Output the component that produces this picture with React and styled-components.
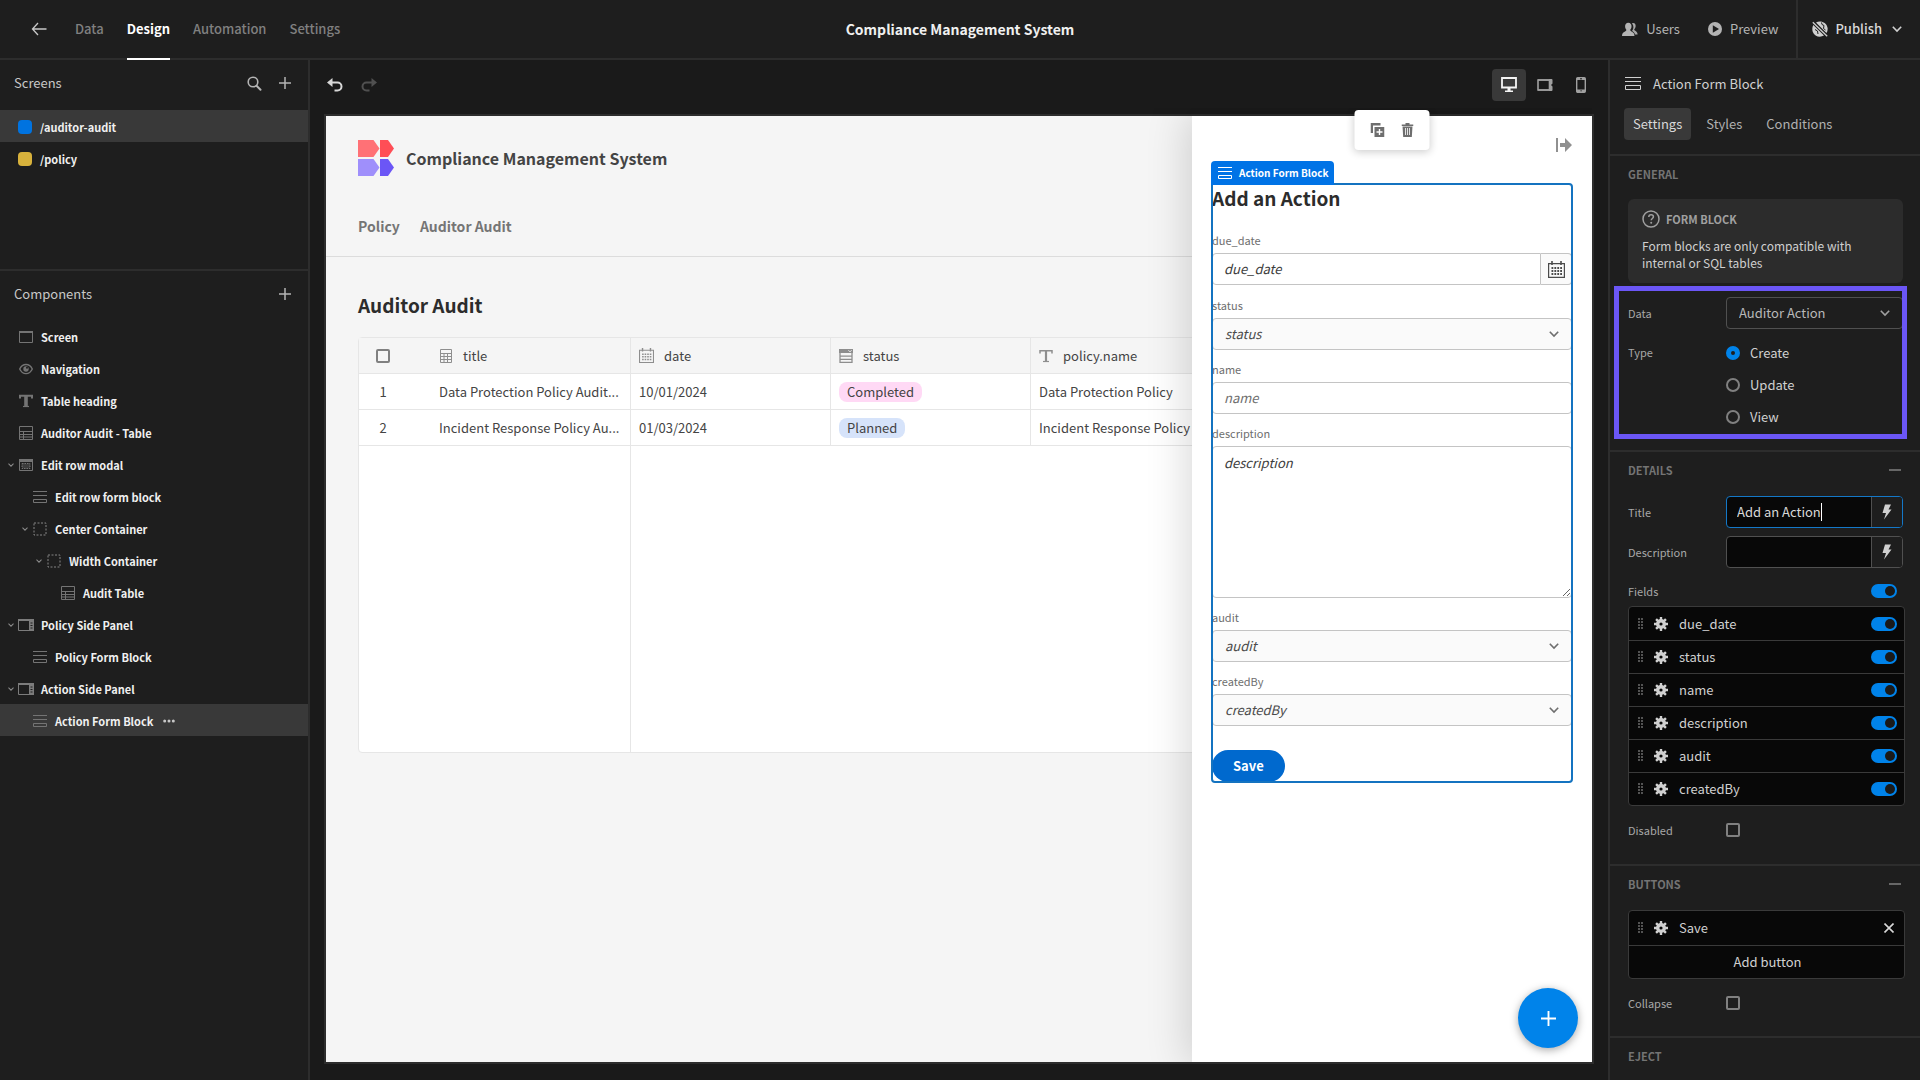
import { useState } from "react";
import styled, { createGlobalStyle, css } from "styled-components";

const GlobalStyle = createGlobalStyle`
  *, *::before, *::after {
    box-sizing: border-box;
  }
  body {
    margin: 0;
    background: #1a1a1a;
  }
  body, button, input, select, textarea {
    font-family: "Noto Sans CJK SC", "Source Sans Pro", "Noto Sans", sans-serif;
    font-size: 13px;
    line-height: 18px;
  }
  button {
    padding: 0;
    border: none;
    background: none;
    color: inherit;
    cursor: pointer;
  }
  svg {
    display: block;
    flex: none;
  }
`;

/* ---------- icons ---------- */

const Svg = ({ w = 16, h = 16, children, ...rest }) => (
  <svg width={w} height={h} viewBox={`0 0 ${w} ${h}`} fill="none" aria-hidden="true" {...rest}>
    {children}
  </svg>
);

const BackIcon = () => (
  <Svg w={16} h={14}>
    <path d="M7 1 1.5 7 7 13M1.5 7H15.5" stroke="#c8c8c8" strokeWidth="1.3" />
  </Svg>
);

const SearchIcon = () => (
  <Svg w={15} h={15}>
    <circle cx="6" cy="6" r="4.8" stroke="#b4b4b4" strokeWidth="1.6" />
    <path d="m9.5 9.8 4 4" stroke="#b4b4b4" strokeWidth="2" strokeLinecap="round" />
  </Svg>
);

const PlusIcon = ({ size = 12, color = "#b4b4b4", weight = 1.5 }) => (
  <svg width={size} height={size} viewBox="0 0 12 12" fill="none" aria-hidden="true">
    <path d="M6 0v12M0 6h12" stroke={color} strokeWidth={weight} />
  </svg>
);

const UndoIcon = () => (
  <Svg w={16} h={14}>
    <path d="M5.5 0v9L0 4.5z" fill="currentColor" />
    <path d="M3 4.5h7.5a4 4 0 0 1 0 8H7.5" stroke="currentColor" strokeWidth="2" />
  </Svg>
);

const RedoIcon = () => (
  <Svg w={16} h={14}>
    <path d="M10.5 0v9L16 4.5z" fill="currentColor" />
    <path d="M13 4.5H5.5a4 4 0 0 0 0 8h3" stroke="currentColor" strokeWidth="2" />
  </Svg>
);

const MonitorIcon = () => (
  <Svg w={16} h={16}>
    <path d="M1 1h14v9.5H1z" stroke="currentColor" strokeWidth="1.8" />
    <path d="M6.5 11h3v2.5H12V15H4v-1.5h2.5z" fill="currentColor" />
  </Svg>
);

const TabletIcon = () => (
  <Svg w={16} h={14}>
    <path d="M1 2h11.5v10H1z" stroke="currentColor" strokeWidth="1.6" />
    <path d="M12 1h2.5q1 0 1 1v3.5L14 7l1.5 1.5V12q0 1-1 1H12z" fill="currentColor" />
    <path d="M1 2h12M1 12h12" stroke="currentColor" strokeWidth="1.4" />
  </Svg>
);

const PhoneIcon = () => (
  <Svg w={10} h={16}>
    <rect x=".7" y=".7" width="8.6" height="14.6" rx="1" stroke="currentColor" strokeWidth="1.4" />
    <path d="M1 1h8v2H1zM1 12.5h8V15H1z" fill="currentColor" />
    <path d="M4 1.8h2M4.5 13.8h1.2" stroke="#1a1a1a" strokeWidth="1" />
  </Svg>
);

const UsersIcon = () => (
  <Svg w={16} h={15}>
    <path
      d="M10 1.2c2.6-.8 4 1 3.600 3.500-.2 1.200-.8 2-1.400 2.800.2 1.400 3.300 1.600 3.400 5H13c-.4-1.800-1.800-2.800-3-3.400 1.800-2.200 2-5.500 0-7.900z"
      fill="#a8a8a8"
    />
    <path
      d="M6.300.8C8.500.8 9.700 2.500 9.500 4.700 9.400 6 8.800 7 8.200 7.800c0 2 4.200 1.600 4.300 6.200H0c.1-4.600 4.400-4.200 4.400-6.200C3.800 7 3.200 6 3.100 4.700 3 2.500 4.100.8 6.300.8z"
      fill="#b4b4b4"
    />
  </Svg>
);

const PlayIcon = () => (
  <Svg w={14} h={14}>
    <circle cx="7" cy="7" r="7" fill="#b4b4b4" />
    <path d="M4.8 3.2v7.6L11 7z" fill="#1e1e1e" />
  </Svg>
);

const GlobeStrikeIcon = () => (
  <Svg w={16} h={16}>
    <path
      d="M4 1.5C8-.8 14.500.8 15.600 7c.2 1.800-.2 3.500-1.100 5L4 1.500zM1.300 4 12 14.600C8 17 2.500 15.500.8 11 0 8.500.2 6 1.300 4z"
      fill="#d0d0d0"
    />
    <path d="m.8 1.2 14.4 14" stroke="#d0d0d0" strokeWidth="1.3" />
    <path d="m3 8.500 2.500 1.500.5 3M9.500 1.500l.5 2 2 1-.5 3 2 1.500" stroke="#1e1e1e" strokeWidth="1" />
  </Svg>
);

const Chevron = ({ size = 10, color = "#a0a0a0", weight = 1.6 }) => (
  <svg width={size} height={size} viewBox="0 0 10 10" fill="none" aria-hidden="true">
    <path d="M.8 2.8 5 7l4.200-4.200" stroke={color} strokeWidth={weight} />
  </svg>
);

const FormIcon = ({ w = 16, color = "#747474" }) => (
  <svg width={w} height={w} viewBox={`0 0 ${w} ${w}`} fill="none" aria-hidden="true">
    <path d={`M0 1.5h${w}M0 5.5h${w}M.5 9.5h${w - 1}v${w - 12 > 3 ? 4 : 3}H.5z`} stroke={color} />
  </svg>
);

const ScreenIcon = () => (
  <Svg w={14} h={14}>
    <path d="M.5 1.5h13v11H.5z" stroke="#747474" />
    <path d="M0 1h14v2H0z" fill="#747474" />
  </Svg>
);

const EyeIcon = ({ color = "#747474" }) => (
  <Svg w={14} h={14}>
    <path d="M.7 7C3.500.9 10.500.9 13.300 7 10.500 13.100 3.500 13.100.7 7z" stroke={color} strokeWidth="1.4" />
    <circle cx="7" cy="7" r="2.7" fill={color} />
    <circle cx="8" cy="5.8" r="1" fill="#1e1e1e" />
  </Svg>
);

const TypeIcon = ({ weight = 3.6, color = "#747474" }) => (
  <Svg w={14} h={14}>
    <path d="M1 4.5V1.8h12v2.7" stroke={color} strokeWidth={weight > 3 ? 2 : 1.5} />
    <path d="M7 1v12" stroke={color} strokeWidth={weight} />
    <path d="M4 12.5h6" stroke={color} strokeWidth="1.2" />
  </Svg>
);

const TableIcon = () => (
  <Svg w={14} h={14}>
    <path d="M.5.5h13v13H.5zM.5 5.5h13M.5 8.500h13M.5 11h13M4.500 5.500v8" stroke="#747474" />
  </Svg>
);

const ModalIcon = () => (
  <Svg w={14} h={14}>
    <path d="M.5 1.5h13v11H.5z" stroke="#747474" />
    <path d="M0 1h14v3H0z" fill="#747474" />
    <path d="M3 5.500h8v5H3z" fill="#3c3c3c" stroke="#747474" strokeDasharray="1.5 1" />
  </Svg>
);

const ContainerIcon = () => (
  <Svg w={14} h={14}>
    <path d="M1 1h12v12H1z" stroke="#858585" strokeDasharray="2 1.5" />
  </Svg>
);

const SidePanelIcon = () => (
  <Svg w={16} h={14}>
    <path d="M.5 1.5h15v11H.5z" stroke="#7c7c7c" />
    <path d="M0 1h16v2H0zM11 1h5v12h-5z" fill="#7c7c7c" />
    <path d="M12.5 5h2M12.5 7.5h2M12.5 10h2" stroke="#1e1e1e" />
  </Svg>
);

const DotsIcon = () => (
  <Svg w={12} h={4}>
    <circle cx="1.7" cy="2" r="1.5" fill="#c8c8c8" />
    <circle cx="6" cy="2" r="1.5" fill="#c8c8c8" />
    <circle cx="10.3" cy="2" r="1.5" fill="#c8c8c8" />
  </Svg>
);

const LogoIcon = () => (
  <Svg w={36} h={36}>
    <path d="M0 0h15.5L21.500 8.500 15.500 17H0z" fill="#ff7176" />
    <path d="M22 0h8l6 8.500-6 8.500h-8z" fill="#ff4e56" />
    <path d="M0 19h15.500L21.500 27.500 15.500 36H0z" fill="#9f8ffb" />
    <path d="M22 19h8l6 8.500-6 8.500h-8z" fill="#6b56f6" />
  </Svg>
);

const CalculatorIcon = () => (
  <Svg w={14} h={14}>
    <path d="M1.500.5h11v13h-11zM1.500 4.500h11M1.500 7.500h11M1.500 10.500h11M5 4.500v9M8.500 4.500v9" stroke="#8e8e8e" />
  </Svg>
);

const CalendarIcon = ({ size = 15, color = "#8e8e8e" }) => (
  <svg width={size} height={size} viewBox="0 0 17 17" fill="none" aria-hidden="true">
    <path d="M.6 2.6h15.800v13.800H.6z" stroke={color} strokeWidth="1.2" />
    <path d="M4 0v4M13 0v4" stroke={color} strokeWidth="1.6" />
    <path
      d="M3.500 7h10.500M3.500 10h10.500M3.500 13h10.500"
      stroke={color}
      strokeWidth="1.8"
      strokeDasharray="1.8 1.1"
    />
  </svg>
);

const OptionsIcon = () => (
  <Svg w={14} h={14}>
    <path d="M0 0h14v4H0z" fill="#8e8e8e" />
    <path d="m9.5 1.300 1.500 1.500 1.500-1.500" stroke="#f5f5f5" />
    <path d="M1 4v9.300h12V4M1 7.200h12M1 10.300h12" stroke="#8e8e8e" strokeWidth="1.3" />
  </Svg>
);

const DuplicateIcon = () => (
  <Svg w={14} h={14}>
    <path d="M0 0h10v2.500H2.500V10H0z" fill="#6e6e6e" />
    <path d="M4 4h10v10H4z" fill="#6e6e6e" />
    <path d="M9 6v6M6 9h6" stroke="#fff" strokeWidth="1.4" />
  </Svg>
);

const TrashIcon = () => (
  <Svg w={12} h={14}>
    <path d="M0 1.500h12V3H0zM4 0h4v2H4z" fill="#6e6e6e" />
    <path d="M1 3.500h10L10.300 14H1.700z" fill="#6e6e6e" />
    <path d="M4 5v7M6 5v7M8 5v7" stroke="#fff" strokeWidth=".8" />
  </Svg>
);

const CloseRightIcon = () => (
  <Svg w={16} h={14}>
    <path d="M0 0h2v14H0zM4 5h5V0l7 7-7 7V9H4z" fill="#909090" />
  </Svg>
);

const HelpIcon = () => (
  <Svg w={18} h={18}>
    <circle cx="9" cy="9" r="8" stroke="#a0a0a0" strokeWidth="1.5" />
    <path d="M6.800 7c0-3 4.600-2.800 4.600-.2 0 1.700-2.200 1.700-2.200 3.500" stroke="#a0a0a0" strokeWidth="1.5" />
    <circle cx="9.2" cy="12.7" r="1" fill="#a0a0a0" />
  </Svg>
);

const BoltIcon = () => (
  <Svg w={10} h={16}>
    <path d="M3 .5h6L6.500 5.500h3L2 15.500 4 9H.5z" fill="#d0d0d0" />
  </Svg>
);

const GripIcon = () => (
  <Svg w={5} h={12}>
    {[0, 3, 6, 9].map((y) => (
      <path key={y} d={`M0 ${y + 1}h2M3 ${y + 1}h2`} stroke="#6c6c6c" strokeWidth="1.5" />
    ))}
  </Svg>
);

const GearIcon = () => (
  <Svg w={14} h={14}>
    <circle cx="7" cy="7" r="3.3" stroke="#d0d0d0" strokeWidth="3.4" />
    {[0, 45, 90, 135].map((a) => (
      <path key={a} d="M7 0v3M7 11v3" stroke="#d0d0d0" strokeWidth="2.4" transform={`rotate(${a} 7 7)`} />
    ))}
  </Svg>
);

const CrossIcon = () => (
  <Svg w={10} h={10}>
    <path d="m.5.500 9 9M9.500.5l-9 9" stroke="#d8d8d8" strokeWidth="1.6" />
  </Svg>
);

const MinusIcon = () => (
  <Svg w={12} h={2}>
    <path d="M0 1h12" stroke="#808080" strokeWidth="1.5" />
  </Svg>
);

/* ---------- shell ---------- */

const Shell = styled.div`
  display: flex;
  flex-direction: column;
  height: 100vh;
  overflow: hidden;
  color: #d8d8d8;
`;

const TopBar = styled.header`
  display: grid;
  grid-template-columns: 1fr auto 1fr;
  align-items: stretch;
  flex: none;
  height: 60px;
  background: #1e1e1e;
  border-bottom: 2px solid #2d2d2d;
`;

const TopNav = styled.nav`
  display: flex;
  align-items: stretch;
  gap: 23px;
  padding-left: 31px;
`;

const BackButton = styled.button`
  margin-right: 5px;
`;

const TopLink = styled.a`
  display: flex;
  align-items: center;
  margin-bottom: -2px;
  border-bottom: 2px solid ${({ $active }) => ($active ? "#fff" : "transparent")};
  color: ${({ $active }) => ($active ? "#fff" : "#808080")};
  font-weight: ${({ $active }) => ($active ? 700 : 500)};
  text-decoration: none;
`;

const AppTitle = styled.h1`
  align-self: center;
  margin: 0;
  color: #f0f0f0;
  font-size: 14px;
  font-weight: 600;
  line-height: 20px;
`;

const TopActions = styled.div`
  display: flex;
  justify-content: flex-end;
`;

const TopAction = styled.button`
  display: flex;
  align-items: center;
  gap: 8px;
  margin-right: 28px;
  color: #b4b4b4;
`;

const PublishButton = styled.button`
  display: flex;
  align-items: center;
  gap: 7px;
  margin-left: -10px;
  padding: 0 18px 0 14px;
  border-left: 2px solid #2d2d2d;
  color: #d8d8d8;
  font-weight: 500;

  svg:last-child {
    margin-left: 3px;
  }
`;

const Workspace = styled.div`
  display: flex;
  flex: 1;
  min-height: 0;
`;

/* ---------- left panel ---------- */

const LeftPanel = styled.aside`
  display: flex;
  flex-direction: column;
  flex: none;
  width: 310px;
  background: #1e1e1e;
  border-right: 2px solid #2d2d2d;
`;

const ScreensSection = styled.section`
  height: 211px;
  border-bottom: 2px solid #2d2d2d;
`;

const PanelHeader = styled.div`
  display: flex;
  align-items: center;
  gap: 17px;
  height: ${({ $height }) => $height}px;
  padding: 0 17px 4px 14px;
`;

const PanelTitle = styled.h2`
  flex: 1;
  margin: 0;
  color: #c8c8c8;
  font-size: 13px;
  font-weight: 400;
`;

const TreeList = styled.ul`
  margin: 0;
  padding: 0;
  list-style: none;
`;

const TreeRow = styled.li`
  display: flex;
  align-items: center;
  height: 32px;
  padding: 1px 0 0 ${({ $level }) => 7 + $level * 14}px;
  background: ${({ $selected }) => ($selected ? "#393939" : "transparent")};
  color: #f0f0f0;
  font-size: 11px;
  font-weight: 700;
`;

const TreeToggle = styled.button`
  width: 10px;
  height: 16px;
  padding: 5px 1px;
`;

const TreeIcon = styled.span`
  display: flex;
  justify-content: center;
  width: 18px;
  margin-right: 6px;
`;

const MoreButton = styled.button`
  margin-left: 10px;
`;

const Swatch = styled.span`
  width: 14px;
  height: 14px;
  border-radius: 4px;
  background: ${({ $color }) => $color};
  margin: 0 8px 0 11px;
`;

/* ---------- canvas ---------- */

const Canvas = styled.main`
  display: flex;
  flex-direction: column;
  flex: 1;
  min-width: 0;
  padding: 0 14px 16px;
  background: #1a1a1a;
`;

const CanvasBar = styled.div`
  display: flex;
  align-items: center;
  justify-content: space-between;
  flex: none;
  height: 54px;
  padding-bottom: 4px;
`;

const History = styled.div`
  display: flex;
  gap: 18px;
  padding-left: 3px;

  button {
    color: #d8d8d8;
  }
  button:disabled {
    color: #505050;
  }
`;

const Devices = styled.div`
  display: flex;
  gap: 2px;
  margin-right: -4px;
`;

const DeviceButton = styled.button`
  display: grid;
  place-items: center;
  width: 34px;
  height: 32px;
  border-radius: 4px;
  background: ${({ $active }) => ($active ? "#393939" : "transparent")};
  color: ${({ $active }) => ($active ? "#f5f5f5" : "#a0a0a0")};
`;

const Frame = styled.div`
  position: relative;
  display: flex;
  flex: 1;
  min-height: 0;
  border: 2px solid #2d2d2d;
`;

const Page = styled.div`
  flex: 1;
  min-width: 0;
  overflow: hidden;
  background: #f5f5f5;
  color: #444;
`;

const SiteHeader = styled.header`
  display: flex;
  flex-direction: column;
  justify-content: space-between;
  height: 141px;
  padding: 24px 32px 18px;
  border-bottom: 1px solid #dcdcdc;
`;

const Brand = styled.div`
  display: flex;
  align-items: center;
  gap: 12px;
  font-size: 16px;
  font-weight: 600;
  line-height: 24px;
`;

const SiteNav = styled.nav`
  display: flex;
  gap: 20px;

  a {
    color: #757575;
    font-size: 14px;
    font-weight: 600;
    line-height: 24px;
    text-decoration: none;
  }
`;

const SiteBody = styled.div`
  padding: 32px;
`;

const SiteHeading = styled.h2`
  margin: 0 0 16px;
  color: #2c2c2c;
  font-size: 19px;
  font-weight: 600;
  line-height: 32px;
`;

const Grid = styled.table`
  width: 100%;
  height: 416px;
  table-layout: fixed;
  border-collapse: separate;
  border-spacing: 0;
  border: 1px solid #e6e6e6;
  border-radius: 4px;
  background: #fff;
`;

const cell = css`
  height: 36px;
  padding: 0 8px;
  border-bottom: 1px solid #e6e6e6;
  border-right: 1px solid #e6e6e6;
  font-weight: 400;
  text-align: left;
  white-space: nowrap;
`;

const HeadCell = styled.th`
  ${cell}
  background: #f5f5f5;
`;

const Cell = styled.td`
  ${cell}
`;

const indexCell = css`
  width: 72px;
  padding: 0 24px 0 0;
  border-right: none;
  text-align: center;
`;

const IndexHead = styled(HeadCell)`
  ${indexCell}
`;

const IndexCell = styled(Cell)`
  ${indexCell}
`;

const FillerCell = styled.td`
  ${({ $line }) => $line && "border-right: 1px solid #e6e6e6;"}
`;

const HeadLabel = styled.span`
  display: flex;
  align-items: center;
  gap: 10px;
`;

const Pill = styled.span`
  display: inline-block;
  padding: 0 8px;
  border-radius: 8px;
  background: ${({ $color }) => $color};
  line-height: 20px;
  vertical-align: middle;
`;

const CheckBox = styled.input.attrs({ type: "checkbox" })`
  appearance: none;
  display: block;
  width: 14px;
  height: 14px;
  margin: ${({ $center }) => ($center ? "0 auto" : "0")};
  border: 2px solid #808080;
  border-radius: 2px;
`;

/* ---------- side panel in the page ---------- */

const SidePanel = styled.aside`
  position: absolute;
  top: 0;
  right: 0;
  bottom: 0;
  width: 400px;
  padding: 22px 20px;
  background: #fff;
  box-shadow: 0 0 40px 4px rgba(0, 0, 0, 0.16);
  clip-path: inset(-8px 0 0 -60px);
  color: #444;
`;

const PanelClose = styled.button`
  display: block;
  margin: 0 0 32px auto;
`;

const Block = styled.form`
  position: relative;
  display: flex;
  flex-direction: column;
  align-items: flex-start;
  gap: 12px;
`;

const Selection = styled.div`
  position: absolute;
  inset: -1px;
  border: 2px solid #1473c0;
  border-radius: 0 4px 4px 4px;
  pointer-events: none;
`;

const SelectionTag = styled.div`
  position: absolute;
  top: -23px;
  left: -1px;
  display: flex;
  align-items: center;
  gap: 7px;
  height: 24px;
  padding: 0 6px 0 7px;
  border-radius: 4px 4px 0 0;
  background: #0073e6;
  color: #fff;
  font-size: 10px;
  font-weight: 700;
  white-space: nowrap;
`;

const BlockToolbar = styled.div`
  position: absolute;
  top: -74px;
  left: 50%;
  display: flex;
  align-items: center;
  gap: 17px;
  height: 40px;
  padding: 0 16px;
  border-radius: 4px;
  background: #fff;
  box-shadow: 0 2px 8px rgba(0, 0, 0, 0.2);
  transform: translateX(-50%);
`;

const BlockHeading = styled.h2`
  margin: 0 0 9px;
  color: #2c2c2c;
  font-size: 19px;
  font-weight: 600;
  line-height: 28px;
`;

const FormField = styled.div`
  display: flex;
  flex-direction: column;
  gap: 6px;
  width: 100%;

  label {
    color: #6e6e6e;
    font-size: 11px;
    line-height: 14px;
  }
`;

const fieldBox = css`
  width: 100%;
  height: 32px;
  padding: 0 11px 2px;
  border: 1px solid #c4c4c4;
  border-radius: 4px;
  background: #fff;
  color: #4b4b4b;
  font-style: italic;

  &::placeholder {
    color: ${({ $strong }) => ($strong ? "#3c3c3c" : "#6e6e6e")};
    opacity: 1;
  }
`;

const FormInput = styled.input`
  ${fieldBox}
`;

const FormTextArea = styled.textarea`
  ${fieldBox}
  display: block;
  height: 152px;
  padding: 7px 11px;
`;

const DateBox = styled.div`
  display: flex;
  height: 33px;

  input {
    border-radius: 4px 0 0 4px;
  }
  button {
    display: grid;
    place-items: center;
    flex: none;
    width: 31px;
    height: 32px;
    border: 1px solid #c4c4c4;
    border-left: none;
    border-radius: 0 4px 4px 0;
    background: #fafafa;
  }
`;

const SelectBox = styled.div`
  position: relative;
  width: 100%;

  svg {
    position: absolute;
    top: 11px;
    right: 13px;
    pointer-events: none;
  }
`;

const FormSelect = styled.select`
  ${fieldBox}
  appearance: none;
  padding: 0 12px;
  background: #fafafa;
`;

const SaveButton = styled.button`
  height: 32px;
  margin-top: 12px;
  padding: 0 21px;
  border-radius: 16px;
  background: #0069ce;
  color: #fff;
  font-weight: 700;
`;

const Fab = styled.button`
  position: absolute;
  right: 14px;
  bottom: 14px;
  display: grid;
  place-items: center;
  width: 60px;
  height: 60px;
  border-radius: 50%;
  background: #0083ea;
  box-shadow: 0 2px 8px rgba(0, 0, 0, 0.35);
`;

/* ---------- settings panel ---------- */

const RightPanel = styled.aside`
  flex: none;
  width: 312px;
  overflow: hidden;
  background: #1e1e1e;
  border-left: 2px solid #2d2d2d;
`;

const BlockHeader = styled.div`
  display: flex;
  align-items: center;
  gap: 12px;
  height: 48px;
  padding-left: 15px;

  h2 {
    margin: 0;
    color: #d0d0d0;
    font-size: 13px;
    font-weight: 400;
  }
`;

const Tabs = styled.div`
  display: flex;
  gap: 6px;
  padding: 0 14px 14px;
  border-bottom: 2px solid #2d2d2d;
`;

const Tab = styled.button`
  height: 32px;
  padding: 0 9px;
  border-radius: 4px;
  background: ${({ $active }) => ($active ? "#393939" : "transparent")};
  color: ${({ $active }) => ($active ? "#d8d8d8" : "#b0b0b0")};
`;

const Section = styled.section`
  padding: 0 15px ${({ $bottom = 26 }) => $bottom}px 18px;
  border-bottom: 2px solid #2d2d2d;
`;

const SectionHeader = styled.div`
  display: flex;
  align-items: center;
  justify-content: space-between;
  height: 44px;
  padding: 0 4px 8px 0;

  h3 {
    margin: 0;
    color: #747474;
    font-size: 11px;
    font-weight: 600;
  }
`;

const Notice = styled.div`
  margin: -1px 2px 14px 0;
  padding: 11px 14px 12px;
  border-radius: 6px;
  background: #2c2c2c;

  h4 {
    display: flex;
    align-items: center;
    gap: 6px;
    margin: 0 0 9px;
    color: #a0a0a0;
    font-size: 11px;
    font-weight: 600;
  }
  p {
    margin: 0;
    color: #d0d0d0;
    font-size: 12px;
    line-height: 17px;
  }
`;

const Highlighted = styled.div`
  position: relative;

  &::after {
    content: "";
    position: absolute;
    inset: -11px -2px -6px -14px;
    border: 5px solid #6b56f6;
    pointer-events: none;
  }
`;

const Property = styled.div`
  display: grid;
  grid-template-columns: 98px 1fr;
  align-items: ${({ $top }) => ($top ? "start" : "center")};
  min-height: 32px;
  margin-bottom: ${({ $gap = 8 }) => $gap}px;
  padding-right: 2px;

  > label,
  > span {
    color: #a8a8a8;
    font-size: 11px;
    line-height: 30px;
  }
`;

const SettingSelect = styled.select`
  appearance: none;
  width: 100%;
  height: 32px;
  padding: 0 12px;
  border: 1px solid #505050;
  border-radius: 4px;
  background: #1e1e1e;
  color: #b8b8b8;
`;

const RadioGroup = styled.div`
  display: flex;
  flex-direction: column;

  label {
    display: flex;
    align-items: center;
    gap: 10px;
    height: 32px;
    color: #d0d0d0;
  }
`;

const Radio = styled.input.attrs({ type: "radio" })`
  appearance: none;
  width: 14px;
  height: 14px;
  margin: 0;
  border: 2px solid #808080;
  border-radius: 50%;

  &:checked {
    border: 5px solid #0083ea;
  }
`;

const BindingBox = styled.div`
  display: flex;
  height: 32px;
  overflow: hidden;
  border: 1px solid ${({ $focused }) => ($focused ? "#1478c8" : "#505050")};
  border-radius: 4px;
  background: #080808;

  input {
    field-sizing: content;
    min-width: 12px;
    max-width: 120px;
    padding: 0 0 1px 10px;
    border: none;
    outline: none;
    background: transparent;
    color: #d8d8d8;
  }
  button {
    display: grid;
    place-items: center;
    width: 31px;
    margin-left: auto;
    border-left: 1px solid #505050;
    background: #1e1e1e;
  }
`;

const Caret = styled.span`
  width: 1px;
  height: 18px;
  margin-top: 6px;
  background: #fff;
`;

const FieldsHeader = styled.div`
  display: flex;
  align-items: center;
  justify-content: space-between;
  height: 31px;
  margin-top: -1px;
  padding-right: 8px;

  span {
    color: #a8a8a8;
    font-size: 11px;
  }
`;

const Switch = styled.input.attrs({ type: "checkbox", role: "switch" })`
  appearance: none;
  display: flex;
  flex: none;
  justify-content: flex-end;
  width: 26px;
  height: 14px;
  margin: 0;
  padding: 2px;
  border-radius: 7px;
  background: #0083ea;

  &::before {
    content: "";
    width: 10px;
    height: 10px;
    border-radius: 50%;
    background: #1a1a1a;
  }
  &:not(:checked) {
    justify-content: flex-start;
    background: #505050;
  }
`;

const ItemList = styled.ul`
  margin: 0 0 8px;
  padding: 0;
  border: 1px solid #3a3a3a;
  border-radius: 4px;
  overflow: hidden;
  background: #080808;
  list-style: none;
`;

const Item = styled.li`
  display: flex;
  align-items: center;
  height: ${({ $height = 33 }) => $height}px;
  padding: 0 7px 0 9px;
  color: #d0d0d0;

  & + & {
    border-top: 1px solid #3a3a3a;
  }
  label,
  > span {
    flex: 1;
  }
  > svg {
    margin-right: 11px;
  }
`;

const RemoveButton = styled.button`
  padding: 2px 3px;
`;

const AddItem = styled.button`
  width: 100%;
  text-align: center;
`;

const SCREENS = [
  { path: "/auditor-audit", color: "#0073e0", selected: true },
  { path: "/policy", color: "#d8b23c" },
];

const TREE = [
  { name: "Screen", icon: <ScreenIcon />, level: 0 },
  { name: "Navigation", icon: <EyeIcon />, level: 0 },
  { name: "Table heading", icon: <TypeIcon />, level: 0 },
  { name: "Auditor Audit - Table", icon: <TableIcon />, level: 0 },
  { name: "Edit row modal", icon: <ModalIcon />, level: 0, open: true },
  { name: "Edit row form block", icon: <FormIcon w={14} />, level: 1 },
  { name: "Center Container", icon: <ContainerIcon />, level: 1, open: true },
  { name: "Width Container", icon: <ContainerIcon />, level: 2, open: true },
  { name: "Audit Table", icon: <TableIcon />, level: 3 },
  { name: "Policy Side Panel", icon: <SidePanelIcon />, level: 0, open: true },
  { name: "Policy Form Block", icon: <FormIcon w={14} />, level: 1 },
  { name: "Action Side Panel", icon: <SidePanelIcon />, level: 0, open: true },
  { name: "Action Form Block", icon: <FormIcon w={14} />, level: 1, selected: true },
];

const ROWS = [
  {
    title: "Data Protection Policy Audit...",
    date: "10/01/2024",
    status: "Completed",
    color: "#ffd9f5",
    policy: "Data Protection Policy",
  },
  {
    title: "Incident Response Policy Au...",
    date: "01/03/2024",
    status: "Planned",
    color: "#d6e3fa",
    policy: "Incident Response Policy",
  },
];

const FIELDS = ["due_date", "status", "name", "description", "audit", "createdBy"];

const SelectField = ({ name }) => (
  <FormField>
    <label htmlFor={`form-${name}`}>{name}</label>
    <SelectBox>
      <FormSelect id={`form-${name}`}>
        <option>{name}</option>
      </FormSelect>
      <Chevron color="#6e6e6e" />
    </SelectBox>
  </FormField>
);

function Header() {
  return (
    <TopBar>
      <TopNav>
        <BackButton aria-label="Back">
          <BackIcon />
        </BackButton>
        {["Data", "Design", "Automation", "Settings"].map((name) => (
          <TopLink key={name} href="#" $active={name === "Design"}>
            {name}
          </TopLink>
        ))}
      </TopNav>
      <AppTitle>Compliance Management System</AppTitle>
      <TopActions>
        <TopAction>
          <UsersIcon />
          Users
        </TopAction>
        <TopAction>
          <PlayIcon />
          Preview
        </TopAction>
        <PublishButton>
          <GlobeStrikeIcon />
          Publish
          <Chevron color="#d0d0d0" />
        </PublishButton>
      </TopActions>
    </TopBar>
  );
}

function Navigator() {
  return (
    <LeftPanel>
      <ScreensSection>
        <PanelHeader $height={50}>
          <PanelTitle>Screens</PanelTitle>
          <button aria-label="Search screens">
            <SearchIcon />
          </button>
          <button aria-label="Add screen">
            <PlusIcon />
          </button>
        </PanelHeader>
        <TreeList>
          {SCREENS.map((screen) => (
            <TreeRow key={screen.path} $level={0} $selected={screen.selected}>
              <Swatch $color={screen.color} />
              {screen.path}
            </TreeRow>
          ))}
        </TreeList>
      </ScreensSection>
      <PanelHeader $height={49}>
        <PanelTitle>Components</PanelTitle>
        <button aria-label="Add component">
          <PlusIcon />
        </button>
      </PanelHeader>
      <TreeList>
        {TREE.map((node) => (
          <TreeRow key={node.name} $level={node.level} $selected={node.selected}>
            <TreeToggle aria-label={`Toggle ${node.name}`}>
              {node.open && <Chevron size={6} color="#8a8a8a" weight={1.7} />}
            </TreeToggle>
            <TreeIcon>{node.icon}</TreeIcon>
            {node.name}
            {node.selected && (
              <MoreButton aria-label="More">
                <DotsIcon />
              </MoreButton>
            )}
          </TreeRow>
        ))}
      </TreeList>
    </LeftPanel>
  );
}

function AuditGrid() {
  return (
    <Grid>
      <colgroup>
        <col width="72" />
        <col width="200" />
        <col width="200" />
        <col width="200" />
        <col />
      </colgroup>
      <thead>
        <tr>
          <IndexHead>
            <CheckBox $center aria-label="Select all rows" />
          </IndexHead>
          <HeadCell>
            <HeadLabel>
              <CalculatorIcon />
              title
            </HeadLabel>
          </HeadCell>
          <HeadCell>
            <HeadLabel>
              <CalendarIcon />
              date
            </HeadLabel>
          </HeadCell>
          <HeadCell>
            <HeadLabel>
              <OptionsIcon />
              status
            </HeadLabel>
          </HeadCell>
          <HeadCell>
            <HeadLabel>
              <TypeIcon weight={2.2} color="#8e8e8e" />
              policy.name
            </HeadLabel>
          </HeadCell>
        </tr>
      </thead>
      <tbody>
        {ROWS.map((row, i) => (
          <tr key={row.title}>
            <IndexCell>{i + 1}</IndexCell>
            <Cell>{row.title}</Cell>
            <Cell>{row.date}</Cell>
            <Cell>
              <Pill $color={row.color}>{row.status}</Pill>
            </Cell>
            <Cell>{row.policy}</Cell>
          </tr>
        ))}
        <tr>
          <FillerCell colSpan={2} $line />
          <FillerCell colSpan={3} />
        </tr>
      </tbody>
    </Grid>
  );
}

function ActionPanel() {
  return (
    <SidePanel>
      <PanelClose aria-label="Close panel">
        <CloseRightIcon />
      </PanelClose>
      <Block onSubmit={(e) => e.preventDefault()}>
        <BlockHeading>Add an Action</BlockHeading>
        <FormField>
          <label htmlFor="form-due">due_date</label>
          <DateBox>
            <FormInput id="form-due" placeholder="due_date" $strong />
            <button type="button" aria-label="Pick a date">
              <CalendarIcon size={17} color="#4b4b4b" />
            </button>
          </DateBox>
        </FormField>
        <SelectField name="status" />
        <FormField>
          <label htmlFor="form-name">name</label>
          <FormInput id="form-name" placeholder="name" />
        </FormField>
        <FormField>
          <label htmlFor="form-description">description</label>
          <FormTextArea id="form-description" placeholder="description" $strong />
        </FormField>
        <SelectField name="audit" />
        <SelectField name="createdBy" />
        <SaveButton>Save</SaveButton>
        <Selection />
        <SelectionTag>
          <FormIcon w={14} color="#fff" />
          Action Form Block
        </SelectionTag>
        <BlockToolbar>
          <button type="button" aria-label="Duplicate">
            <DuplicateIcon />
          </button>
          <button type="button" aria-label="Delete">
            <TrashIcon />
          </button>
        </BlockToolbar>
      </Block>
      <Fab aria-label="Add">
        <PlusIcon size={15} color="#fff" />
      </Fab>
    </SidePanel>
  );
}

function Preview() {
  return (
    <Canvas>
      <CanvasBar>
        <History>
          <button aria-label="Undo">
            <UndoIcon />
          </button>
          <button aria-label="Redo" disabled>
            <RedoIcon />
          </button>
        </History>
        <Devices>
          <DeviceButton $active aria-label="Desktop">
            <MonitorIcon />
          </DeviceButton>
          <DeviceButton aria-label="Tablet">
            <TabletIcon />
          </DeviceButton>
          <DeviceButton aria-label="Mobile">
            <PhoneIcon />
          </DeviceButton>
        </Devices>
      </CanvasBar>
      <Frame>
        <Page>
          <SiteHeader>
            <Brand>
              <LogoIcon />
              Compliance Management System
            </Brand>
            <SiteNav>
              <a href="#">Policy</a>
              <a href="#">Auditor Audit</a>
            </SiteNav>
          </SiteHeader>
          <SiteBody>
            <SiteHeading>Auditor Audit</SiteHeading>
            <AuditGrid />
          </SiteBody>
        </Page>
        <ActionPanel />
      </Frame>
    </Canvas>
  );
}

function Settings() {
  const [type, setType] = useState("Create");
  const [title, setTitle] = useState("Add an Action");

  return (
    <RightPanel>
      <BlockHeader>
        <FormIcon color="#d0d0d0" />
        <h2>Action Form Block</h2>
      </BlockHeader>
      <Tabs>
        <Tab $active>Settings</Tab>
        <Tab>Styles</Tab>
        <Tab>Conditions</Tab>
      </Tabs>

      <Section $bottom={17}>
        <SectionHeader>
          <h3>GENERAL</h3>
        </SectionHeader>
        <Notice>
          <h4>
            <HelpIcon />
            FORM BLOCK
          </h4>
          <p>Form blocks are only compatible with internal or SQL tables</p>
        </Notice>
        <Highlighted>
          <Property>
            <label htmlFor="set-data">Data</label>
            <SelectBox>
              <SettingSelect id="set-data">
                <option>Auditor Action</option>
              </SettingSelect>
              <Chevron />
            </SelectBox>
          </Property>
          <Property $top $gap={0}>
            <span id="set-type">Type</span>
            <RadioGroup role="radiogroup" aria-labelledby="set-type">
              {["Create", "Update", "View"].map((name) => (
                <label key={name}>
                  <Radio name="type" checked={type === name} onChange={() => setType(name)} />
                  {name}
                </label>
              ))}
            </RadioGroup>
          </Property>
        </Highlighted>
      </Section>

      <Section $bottom={18}>
        <SectionHeader>
          <h3>DETAILS</h3>
          <button aria-label="Collapse details">
            <MinusIcon />
          </button>
        </SectionHeader>
        <Property>
          <label htmlFor="set-title">Title</label>
          <BindingBox $focused>
            <input id="set-title" value={title} onChange={(e) => setTitle(e.target.value)} />
            <Caret />
            <button aria-label="Bind title">
              <BoltIcon />
            </button>
          </BindingBox>
        </Property>
        <Property>
          <label htmlFor="set-description">Description</label>
          <BindingBox>
            <input id="set-description" />
            <button aria-label="Bind description">
              <BoltIcon />
            </button>
          </BindingBox>
        </Property>
        <FieldsHeader>
          <span>Fields</span>
          <Switch defaultChecked aria-label="All fields" />
        </FieldsHeader>
        <ItemList>
          {FIELDS.map((name) => (
            <Item key={name}>
              <GripIcon />
              <GearIcon />
              <label htmlFor={`field-${name}`}>{name}</label>
              <Switch id={`field-${name}`} defaultChecked />
            </Item>
          ))}
        </ItemList>
        <Property $gap={0}>
          <label htmlFor="set-disabled">Disabled</label>
          <CheckBox id="set-disabled" />
        </Property>
      </Section>

      <Section $bottom={17}>
        <SectionHeader>
          <h3>BUTTONS</h3>
          <button aria-label="Collapse buttons">
            <MinusIcon />
          </button>
        </SectionHeader>
        <ItemList>
          <Item $height={34}>
            <GripIcon />
            <GearIcon />
            <span>Save</span>
            <RemoveButton aria-label="Remove Save">
              <CrossIcon />
            </RemoveButton>
          </Item>
          <Item>
            <AddItem>Add button</AddItem>
          </Item>
        </ItemList>
        <Property $gap={0}>
          <label htmlFor="set-collapse">Collapse</label>
          <CheckBox id="set-collapse" />
        </Property>
      </Section>

      <Section>
        <SectionHeader>
          <h3>EJECT</h3>
        </SectionHeader>
      </Section>
    </RightPanel>
  );
}

export default function App() {
  return (
    <>
      <GlobalStyle />
      <Shell>
        <Header />
        <Workspace>
          <Navigator />
          <Preview />
          <Settings />
        </Workspace>
      </Shell>
    </>
  );
}
